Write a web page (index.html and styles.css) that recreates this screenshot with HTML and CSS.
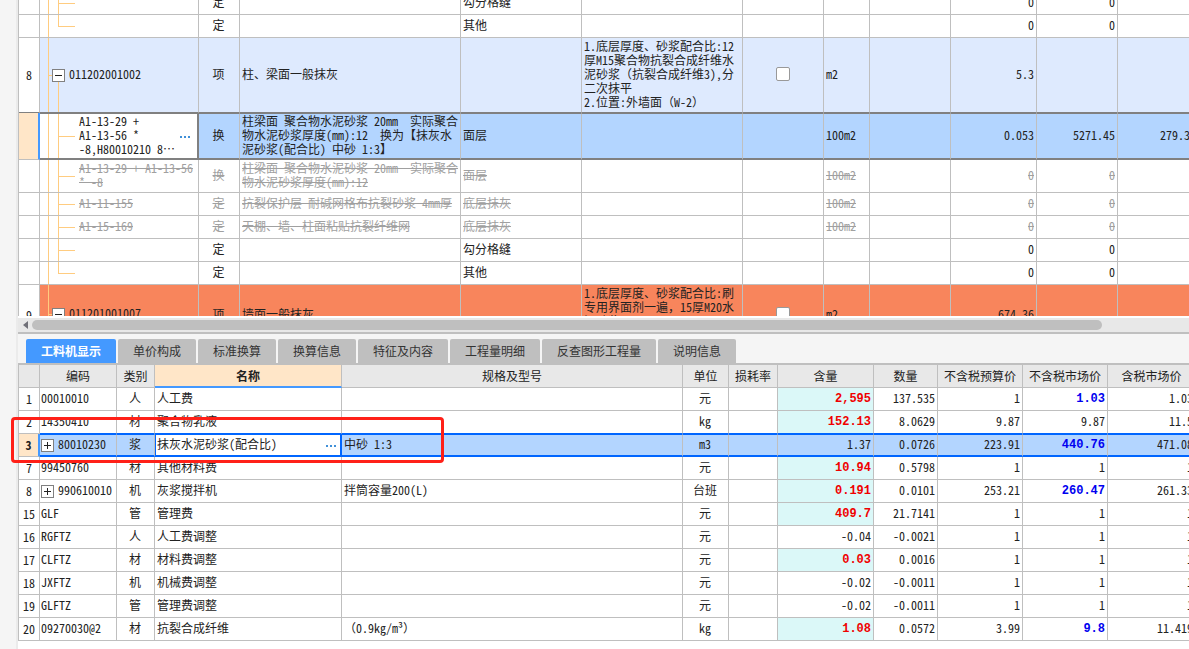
FILE: index.html
```html
<!DOCTYPE html>
<html lang="zh-CN">
<head>
<meta charset="utf-8">
<title>工料机显示</title>
<link rel="stylesheet" href="styles.css">
</head>
<body>
<div class="app">
<aside class="gutter"></aside>
<main class="workspace">
<section class="bill" aria-label="清单">
<table class="grid bill-grid">
<colgroup><col class="w21"><col class="w159"><col class="w41"><col class="w221"><col class="w121"><col><col class="w81"><col class="w46"><col class="w81"><col class="w86"><col class="w81"><col class="w81"></colgroup>
<tbody>
<tr><td></td><td class="child"></td><td class="mid">定</td><td></td><td>勾分格缝</td><td></td><td></td><td></td><td></td><td class="num">0</td><td class="num">0</td><td></td></tr>
<tr><td></td><td class="child last"></td><td class="mid">定</td><td></td><td>其他</td><td></td><td></td><td></td><td></td><td class="num">0</td><td class="num">0</td><td></td></tr>
<tr class="item before-picked"><td class="row-no">8</td><td class="parent"><button class="toggle minus" aria-label="折叠"></button>011202001002</td><td class="mid">项</td><td>柱、梁面一般抹灰</td><td></td><td>1.底层厚度、砂浆配合比:12<br>厚M15聚合物抗裂合成纤维水<br>泥砂浆（抗裂合成纤维3),分<br>二次抹平<br>2.位置:外墙面（W-2）</td><td class="mid"><input type="checkbox" class="check" aria-label="锁定 8"></td><td>m2</td><td></td><td class="num">5.3</td><td></td><td></td></tr>
<tr class="picked"><td class="row-no"></td><td class="child active">A1-13-29 +<br>A1-13-56 *<br>-8,H80010210 8…<button class="more" aria-label="更多"><svg width="11" height="2" viewBox="0 0 11 2"><path d="M0 0h2v2H0zM4 0h2v2H4zM8 0h2v2H8z" fill="currentColor"/></svg></button></td><td class="mid">换</td><td>柱梁面 聚合物水泥砂浆 20mm&nbsp; 实际聚合<br>物水泥砂浆厚度(mm):12&nbsp; 换为【抹灰水<br>泥砂浆(配合比) 中砂 1:3】</td><td>面层</td><td></td><td></td><td>100m2</td><td></td><td class="num">0.053</td><td class="num">5271.45</td><td class="num">279.39</td></tr>
<tr class="void tall"><td></td><td class="child">A1-13-29 + A1-13-56<br>* -8</td><td class="mid">换</td><td>柱梁面 聚合物水泥砂浆 20mm&nbsp; 实际聚合<br>物水泥砂浆厚度(mm):12</td><td>面层</td><td></td><td></td><td>100m2</td><td></td><td class="num">0</td><td class="num">0</td><td></td></tr>
<tr class="void"><td></td><td class="child">A1-11-155</td><td class="mid">定</td><td>抗裂保护层 耐碱网格布抗裂砂浆 4mm厚</td><td>底层抹灰</td><td></td><td></td><td>100m2</td><td></td><td class="num">0</td><td class="num">0</td><td></td></tr>
<tr class="void"><td></td><td class="child">A1-15-169</td><td class="mid">定</td><td>天棚、墙、柱面粘贴抗裂纤维网</td><td>底层抹灰</td><td></td><td></td><td>100m2</td><td></td><td class="num">0</td><td class="num">0</td><td></td></tr>
<tr><td></td><td class="child"></td><td class="mid">定</td><td></td><td>勾分格缝</td><td></td><td></td><td></td><td></td><td class="num">0</td><td class="num">0</td><td></td></tr>
<tr><td></td><td class="child last"></td><td class="mid">定</td><td></td><td>其他</td><td></td><td></td><td></td><td></td><td class="num">0</td><td class="num">0</td><td></td></tr>
<tr class="item warn"><td class="row-no">9</td><td class="parent"><button class="toggle minus" aria-label="折叠"></button>011201001007</td><td class="mid">项</td><td>墙面一般抹灰</td><td></td><td>1.底层厚度、砂浆配合比:刷<br>专用界面剂一遍，15厚M20水<br>泥砂浆<br>2.位置:内墙面</td><td class="mid"><input type="checkbox" class="check" aria-label="锁定 9"></td><td>m2</td><td></td><td class="num">674.36</td><td></td><td></td></tr>
</tbody>
</table>
</section>
<div class="scrollbar"><svg class="arrow" width="5" height="8" viewBox="0 0 5 8"><path d="M5 0v8L0 4z" fill="#707078"/></svg><div class="thumb"></div></div>
<nav class="tabs" role="tablist">
<button class="tab current" role="tab" aria-selected="true">工料机显示</button>
<button class="tab" role="tab">单价构成</button>
<button class="tab" role="tab">标准换算</button>
<button class="tab" role="tab">换算信息</button>
<button class="tab" role="tab">特征及内容</button>
<button class="tab" role="tab">工程量明细</button>
<button class="tab" role="tab">反查图形工程量</button>
<button class="tab" role="tab">说明信息</button>
</nav>
<section class="detail" aria-label="工料机显示">
<table class="grid detail-grid">
<colgroup><col class="w21"><col class="w77"><col class="w38"><col class="w187"><col><col class="w46"><col class="w49"><col class="w96"><col class="w64"><col class="w85"><col class="w85"><col class="w88"></colgroup>
<thead>
<tr><th></th><th>编码</th><th>类别</th><th class="sorted">名称</th><th>规格及型号</th><th>单位</th><th>损耗率</th><th>含量</th><th>数量</th><th>不含税预算价</th><th>不含税市场价</th><th>含税市场价</th></tr>
</thead>
<tbody>
<tr><td class="row-no">1</td><td>00010010</td><td class="mid">人</td><td>人工费</td><td></td><td class="mid">元</td><td></td><td class="num changed">2,595</td><td class="num">137.535</td><td class="num">1</td><td class="num priced">1.03</td><td class="num">1.03</td></tr>
<tr class="before-chosen"><td class="row-no">2</td><td>14350410</td><td class="mid">材</td><td>聚合物乳液</td><td></td><td class="mid">kg</td><td></td><td class="num changed">152.13</td><td class="num">8.0629</td><td class="num">9.87</td><td class="num">9.87</td><td class="num">11.5</td></tr>
<tr class="chosen"><td class="row-no">3</td><td><button class="toggle plus" aria-label="展开"></button>80010230</td><td class="mid">浆</td><td class="active">抹灰水泥砂浆(配合比)<button class="more" aria-label="更多"><svg width="11" height="2" viewBox="0 0 11 2"><path d="M0 0h2v2H0zM4 0h2v2H4zM8 0h2v2H8z" fill="currentColor"/></svg></button></td><td>中砂 1:3</td><td class="mid">m3</td><td></td><td class="num">1.37</td><td class="num">0.0726</td><td class="num">223.91</td><td class="num priced">440.76</td><td class="num">471.08</td></tr>
<tr><td class="row-no">7</td><td>99450760</td><td class="mid">材</td><td>其他材料费</td><td></td><td class="mid">元</td><td></td><td class="num changed">10.94</td><td class="num">0.5798</td><td class="num">1</td><td class="num">1</td><td class="num">1</td></tr>
<tr><td class="row-no">8</td><td><button class="toggle plus" aria-label="展开"></button>990610010</td><td class="mid">机</td><td>灰浆搅拌机</td><td>拌筒容量200(L)</td><td class="mid">台班</td><td></td><td class="num changed">0.191</td><td class="num">0.0101</td><td class="num">253.21</td><td class="num priced">260.47</td><td class="num">261.33</td></tr>
<tr><td class="row-no">15</td><td>GLF</td><td class="mid">管</td><td>管理费</td><td></td><td class="mid">元</td><td></td><td class="num changed">409.7</td><td class="num">21.7141</td><td class="num">1</td><td class="num">1</td><td class="num">1</td></tr>
<tr><td class="row-no">16</td><td>RGFTZ</td><td class="mid">人</td><td>人工费调整</td><td></td><td class="mid">元</td><td></td><td class="num">-0.04</td><td class="num">-0.0021</td><td class="num">1</td><td class="num">1</td><td class="num">1</td></tr>
<tr><td class="row-no">17</td><td>CLFTZ</td><td class="mid">材</td><td>材料费调整</td><td></td><td class="mid">元</td><td></td><td class="num changed">0.03</td><td class="num">0.0016</td><td class="num">1</td><td class="num">1</td><td class="num">1</td></tr>
<tr><td class="row-no">18</td><td>JXFTZ</td><td class="mid">机</td><td>机械费调整</td><td></td><td class="mid">元</td><td></td><td class="num">-0.02</td><td class="num">-0.0011</td><td class="num">1</td><td class="num">1</td><td class="num">1</td></tr>
<tr><td class="row-no">19</td><td>GLFTZ</td><td class="mid">管</td><td>管理费调整</td><td></td><td class="mid">元</td><td></td><td class="num">-0.02</td><td class="num">-0.0011</td><td class="num">1</td><td class="num">1</td><td class="num">1</td></tr>
<tr><td class="row-no">20</td><td>09270030@2</td><td class="mid">材</td><td>抗裂合成纤维</td><td>（0.9kg/m³）</td><td class="mid">kg</td><td></td><td class="num changed">1.08</td><td class="num">0.0572</td><td class="num">3.99</td><td class="num priced">9.8</td><td class="num">11.419</td></tr>
</tbody>
</table>
<div class="callout"></div>
</section>
</main>
</div>
</body>
</html>
```
FILE: styles.css
```css
* { box-sizing: border-box; }

body {
  margin: 0;
  background: #fff;
  color: #222;
  font: 12px/14px "Noto Sans Mono CJK SC", "Liberation Mono", "Noto Sans CJK SC", monospace;
  overflow: hidden;
}

button { font: inherit; color: inherit; border: 0; padding: 0; margin: 0; }

.app { display: flex; min-height: 100vh; overflow: hidden; }
.gutter { flex: 0 0 18px; background: #f5f5f5; border-right: 2px solid #ebebeb; }
.workspace { flex: 1; min-width: 0; }

/* Grids */
.grid {
  width: 100%;
  table-layout: fixed;
  border-collapse: separate;
  border-spacing: 0;
  border-left: 1px solid #bfbfbf;
}
.grid tr { height: 23px; }
.grid td, .grid th {
  padding: 0 2px 2px 2px;
  border: solid #bfbfbf;
  border-width: 0 1px 1px 0;
  white-space: nowrap;
  vertical-align: middle;
  text-align: left;
  position: relative;
}
.grid th { background: #e8e8e8; font-weight: normal; text-align: center; padding: 0; }
.grid .mid { text-align: center; padding: 0 1px 2px 0; }
.grid .row-no { text-align: center; padding: 0; }
.grid .num { text-align: right; }

.w21 { width: 21px; }
.w38 { width: 38px; }
.w41 { width: 41px; }
.w46 { width: 46px; }
.w49 { width: 49px; }
.w64 { width: 64px; }
.w77 { width: 77px; }
.w81 { width: 81px; }
.w85 { width: 85px; }
.w86 { width: 86px; }
.w88 { width: 88px; }
.w96 { width: 96px; }
.w121 { width: 121px; }
.w159 { width: 159px; }
.w187 { width: 187px; }
.w221 { width: 221px; }

/* Upper bill, scrolled slightly past its first row */
.bill { height: 318px; overflow: hidden; border-bottom: 2px solid #fff; }
.bill-grid { margin-top: -8px; min-width: 1181px; }
.bill-grid .tall { height: 33px; }
.bill-grid .item { height: 75px; }
.bill-grid .warn { height: 60px; }
.item td:not(.row-no) { background-color: #deeafe; }
.warn td:not(.row-no) { background-color: #f8855c; }
.before-picked td { border-bottom-color: #808080; }
.void td { color: #a0a0a0; text-decoration: line-through; }

.grid .child {
  padding-left: 39px;
  background-image: linear-gradient(#ffcc80, #ffcc80), linear-gradient(#ffcc80, #ffcc80), linear-gradient(#ffcc80, #ffcc80);
  background-repeat: no-repeat;
  background-position: 8px 0, 18px 0, 18px 50%;
  background-size: 1px 100%, 1px 100%, 17px 1px;
}
.grid .last { background-size: 1px 100%, 1px 50%, 17px 1px; }
.grid .parent {
  padding-left: 12px;
  background-image: linear-gradient(#ffcc80, #ffcc80), linear-gradient(#ffcc80, #ffcc80), linear-gradient(#ffcc80, #ffcc80);
  background-repeat: no-repeat;
  background-position: 8px 0, 18px 100%, 8px 50%;
  background-size: 1px 100%, 1px 50%, 4px 1px;
}

.bill-grid .picked { height: 47px; }
.picked td {
  background-color: #b3d5ff;
  border-top: 1px solid #808080;
  border-bottom: 2px solid #808080;
}
.picked .row-no, .chosen .row-no {
  background: #ffe6c8;
  border-color: #bfbfbf;
  border-right: 2px solid #4499ff;
}
.picked .row-no { border-bottom-width: 1px; border-top: 0; }
.grid .picked .active { background-color: #fff; border-right: 2px solid #808080; }

.toggle {
  width: 13px;
  height: 13px;
  margin-right: 4px;
  border: 1px solid #808080;
  vertical-align: -2px;
  background: linear-gradient(#222, #222) center / 7px 1px no-repeat, #fff;
}
.plus {
  background: linear-gradient(#222, #222) center / 7px 1px no-repeat,
    linear-gradient(#222, #222) center / 1px 7px no-repeat, #fff;
}
.more {
  position: absolute;
  right: 6px;
  top: 50%;
  height: 2px;
  display: flex;
  background: none;
  color: #4090d8;
}
.detail .more { right: 3px; }
.check {
  appearance: none;
  display: block;
  width: 14px;
  height: 14px;
  margin: 0 auto;
  border: 1px solid #999;
  border-radius: 2px;
  background: #fff;
}

/* Horizontal scroll bar */
.scrollbar {
  display: flex;
  align-items: center;
  height: 16px;
  padding: 0 87px 0 5px;
  background: #e8e8e8;
  border-bottom: 2px solid #bfbfbf;
}
.arrow { margin-right: 4px; }
.thumb { flex: 1; height: 10px; border-radius: 5px; background: #bfbfbf; }

/* Tabs */
.tabs {
  display: flex;
  gap: 2px;
  padding: 5px 8px 0;
  background: #f5f5f5;
  border-bottom: 2px solid #bfbfbf;
}
.tab {
  height: 24px;
  padding: 0 15px;
  border-radius: 2px 2px 0 0;
  background: #bfbfbf;
  color: #333;
  white-space: nowrap;
}
.current { background: #4499ff; color: #fff; font-weight: bold; }

/* Resource detail */
.detail { position: relative; }
.detail-grid { min-width: 1178px; }
.grid .sorted { background: #ffe6c8; font-weight: bold; border-bottom: 2px solid #4499ff; }
.changed { background: #dbf8f8; color: #f00000; }
.priced { color: #0000f0; }
.grid .changed, .grid .priced { padding-bottom: 0; font: bold 12px/14px "Liberation Mono", monospace; }
.before-chosen td:not(.row-no) { border-bottom-color: #0066ff; }
.chosen td {
  background: #b3d5ff;
  border-top: 1px solid #0066ff;
  border-bottom: 2px solid #0066ff;
}
.detail-grid td:nth-child(2) { padding-left: 1px; }
.grid .chosen .row-no { font-weight: bold; border-top: 0; border-bottom: 1px solid #bfbfbf; }
.grid .chosen .active { background: #fff; border-right: 2px solid #0066ff; border-left: 1px solid #0066ff; padding-left: 1px; }

/* Marker drawn over the selected resource */
.callout {
  position: absolute;
  left: -7px;
  top: 52px;
  width: 433px;
  height: 46px;
  border: 3px solid #ff2018;
  border-radius: 4px;
  pointer-events: none;
}
```
